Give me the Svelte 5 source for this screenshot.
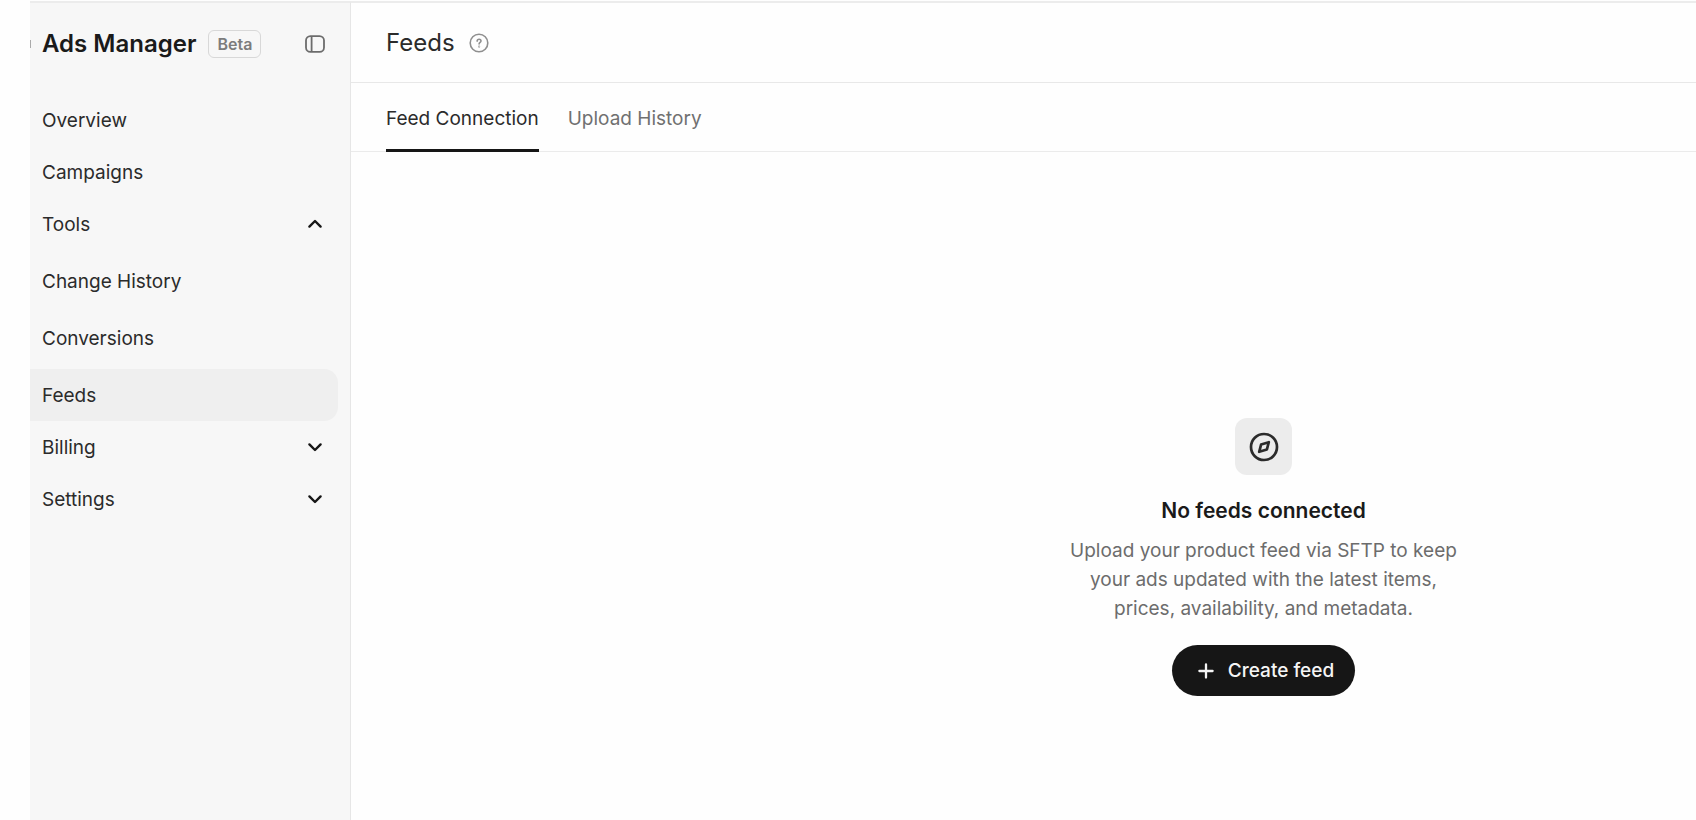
<script>
	let current = $state('Feeds');
	let tab = $state('Feed Connection');
	let open = $state({ Tools: true, Billing: false, Settings: false });

	const links = ['Overview', 'Campaigns'];
	const tabs = ['Feed Connection', 'Upload History'];
	const groups = [
		{ name: 'Tools', items: ['Change History', 'Conversions', 'Feeds'] },
		{ name: 'Billing', items: ['Invoices', 'Payment Methods'] },
		{ name: 'Settings', items: ['Account', 'Members'] }
	];
</script>

<div class="app">
	<aside class="sidebar">
		<div class="brand">
			<span class="logo"></span>
			<span class="name">Ads Manager</span>
			<span class="badge">Beta</span>
			<button class="collapse" aria-label="Toggle sidebar">
				<svg width="22" height="22" viewBox="0 0 22 22" fill="none" stroke="currentColor" stroke-width="1.8">
					<rect x="2" y="3.2" width="18" height="15.6" rx="4.4" />
					<path d="M7.6 3.2v15.6" />
				</svg>
			</button>
		</div>

		<nav>
			{#each links as name}
				<a href="#{name}" class="row" class:active={current === name} onclick={() => (current = name)}>{name}</a>
			{/each}
			{#each groups as group}
				<button
					class="row"
					aria-expanded={open[group.name]}
					onclick={() => (open[group.name] = !open[group.name])}
				>
					{group.name}
					<svg class:up={open[group.name]} width="16" height="16" viewBox="0 0 16 16" fill="none" stroke="currentColor" stroke-width="2.4" stroke-linecap="round" stroke-linejoin="round">
						<path d="M2.4 5.4L8 11l5.6-5.6" />
					</svg>
				</button>
				{#if open[group.name]}
					<div class="sub">
						{#each group.items as name}
							<a href="#{name}" class="row" class:active={current === name} onclick={() => (current = name)}>{name}</a>
						{/each}
					</div>
				{/if}
			{/each}
		</nav>
	</aside>

	<main>
		<header>
			<h1>Feeds</h1>
			<button class="help" aria-label="About feeds">
				<svg width="20" height="20" viewBox="0 0 20 20" fill="none" stroke="currentColor" stroke-width="1.6" stroke-linecap="round">
					<circle cx="10" cy="10" r="8.8" />
					<path d="M8.1 8.1c.1-1.2.9-1.9 2-1.9s1.9.7 1.9 1.7c0 1.5-1.9 1.5-1.9 3.1" />
					<circle cx="10.1" cy="13.6" r=".3" />
				</svg>
			</button>
		</header>

		<div class="tabs" role="tablist">
			{#each tabs as name}
				<button role="tab" class:selected={tab === name} aria-selected={tab === name} onclick={() => (tab = name)}>{name}</button>
			{/each}
		</div>

		<section class="empty">
			<div class="tile">
				<svg width="30" height="30" viewBox="0 0 30 30" fill="none" stroke="currentColor" stroke-width="2.7" stroke-linejoin="round">
					<circle cx="15" cy="15" r="13" />
					<path d="M19.8 10.2l-1.9 7.3-7.7 2.3 1.9-7.3z" />
				</svg>
			</div>
			<h2>No feeds connected</h2>
			<p>Upload your product feed via SFTP to keep your ads updated with the latest items, prices, availability, and metadata.</p>
			<button class="create">
				<svg width="16" height="16" viewBox="0 0 16 16" fill="none" stroke="currentColor" stroke-width="2.3" stroke-linecap="round">
					<path d="M8 1.4v13.2M1.4 8h13.2" />
				</svg>
				Create feed
			</button>
		</section>
	</main>
</div>

<style>
	:global(body) {
		background: #fefefe;
		font-family: Inter, 'Liberation Sans', sans-serif;
	}
	.app {
		display: flex;
		min-height: 100vh;
		padding: 1px 0 0 30px;
		box-sizing: border-box;
		font-size: 19px;
		color: #2b2b2b;
	}
	button {
		font: inherit;
		color: inherit;
		background: none;
		border: 0;
		padding: 0;
		cursor: pointer;
	}
	svg {
		display: block;
	}

	.sidebar {
		flex: none;
		width: 320px;
		background: #f7f7f7;
		border-top: 2px solid #ececec;
		border-right: 1px solid #e6e6e6;
	}
	.brand {
		display: flex;
		align-items: center;
		height: 81px;
		padding: 0 24px 0 12px;
		position: relative;
	}
	.logo {
		position: absolute;
		left: 0;
		width: 1px;
		height: 8px;
		background: #aaa;
	}
	.name {
		font-size: 24px;
		font-weight: 600;
		color: #1a1a1a;
	}
	.badge {
		margin-left: 12px;
		padding: 0 8px;
		border: 1px solid #d8d8d8;
		border-radius: 6px;
		font-size: 16px;
		font-weight: 600;
		line-height: 26px;
		color: #7c7c7c;
	}
	.collapse {
		margin-left: auto;
		color: #6c6c6c;
	}
	nav {
		padding: 10px 12px 0 0;
	}
	.row {
		display: flex;
		align-items: center;
		justify-content: space-between;
		box-sizing: border-box;
		width: 100%;
		height: 52px;
		padding: 0 15px 0 12px;
		border-radius: 0 14px 14px 0;
		color: inherit;
		text-decoration: none;
	}
	.row svg {
		color: #161616;
	}
	.row.active {
		background: #efefef;
	}
	.sub .row {
		margin-top: 5px;
	}
	.up {
		transform: rotate(180deg);
	}

	main {
		flex: 1;
		min-width: 0;
		border-top: 2px solid #ececec;
	}
	header {
		display: flex;
		align-items: center;
		gap: 14px;
		height: 79px;
		padding: 0 35px;
		border-bottom: 1px solid #e8e8e8;
	}
	h1 {
		margin: 0;
		font-size: 24px;
		font-weight: 400;
	}
	.help {
		color: #8f8f8f;
	}
	.tabs {
		display: flex;
		gap: 29px;
		height: 68px;
		padding: 0 35px;
		border-bottom: 1px solid #ebebeb;
	}
	.tabs button {
		margin-bottom: -1px;
		padding-top: 4px;
		border-bottom: 3px solid transparent;
		color: #707070;
	}
	.tabs .selected {
		border-color: #161616;
		color: #2b2b2b;
	}

	.empty {
		display: flex;
		flex-direction: column;
		align-items: center;
		padding: 266px 0 40px 480px;
		text-align: center;
	}
	.tile {
		display: grid;
		place-items: center;
		width: 57px;
		height: 57px;
		border-radius: 12px;
		background: #ececec;
	}
	h2 {
		margin: 22px 0 11px;
		font-size: 21px;
		font-weight: 600;
		line-height: 28px;
		color: #1a1a1a;
	}
	p {
		max-width: 400px;
		margin: 0;
		line-height: 29px;
		color: #6c6c6c;
	}
	.create {
		display: flex;
		align-items: center;
		gap: 14px;
		height: 51px;
		margin-top: 22px;
		padding: 0 21px 0 26px;
		border-radius: 26px;
		background: #161616;
		color: #f5f5f5;
		font-weight: 500;
	}
</style>
